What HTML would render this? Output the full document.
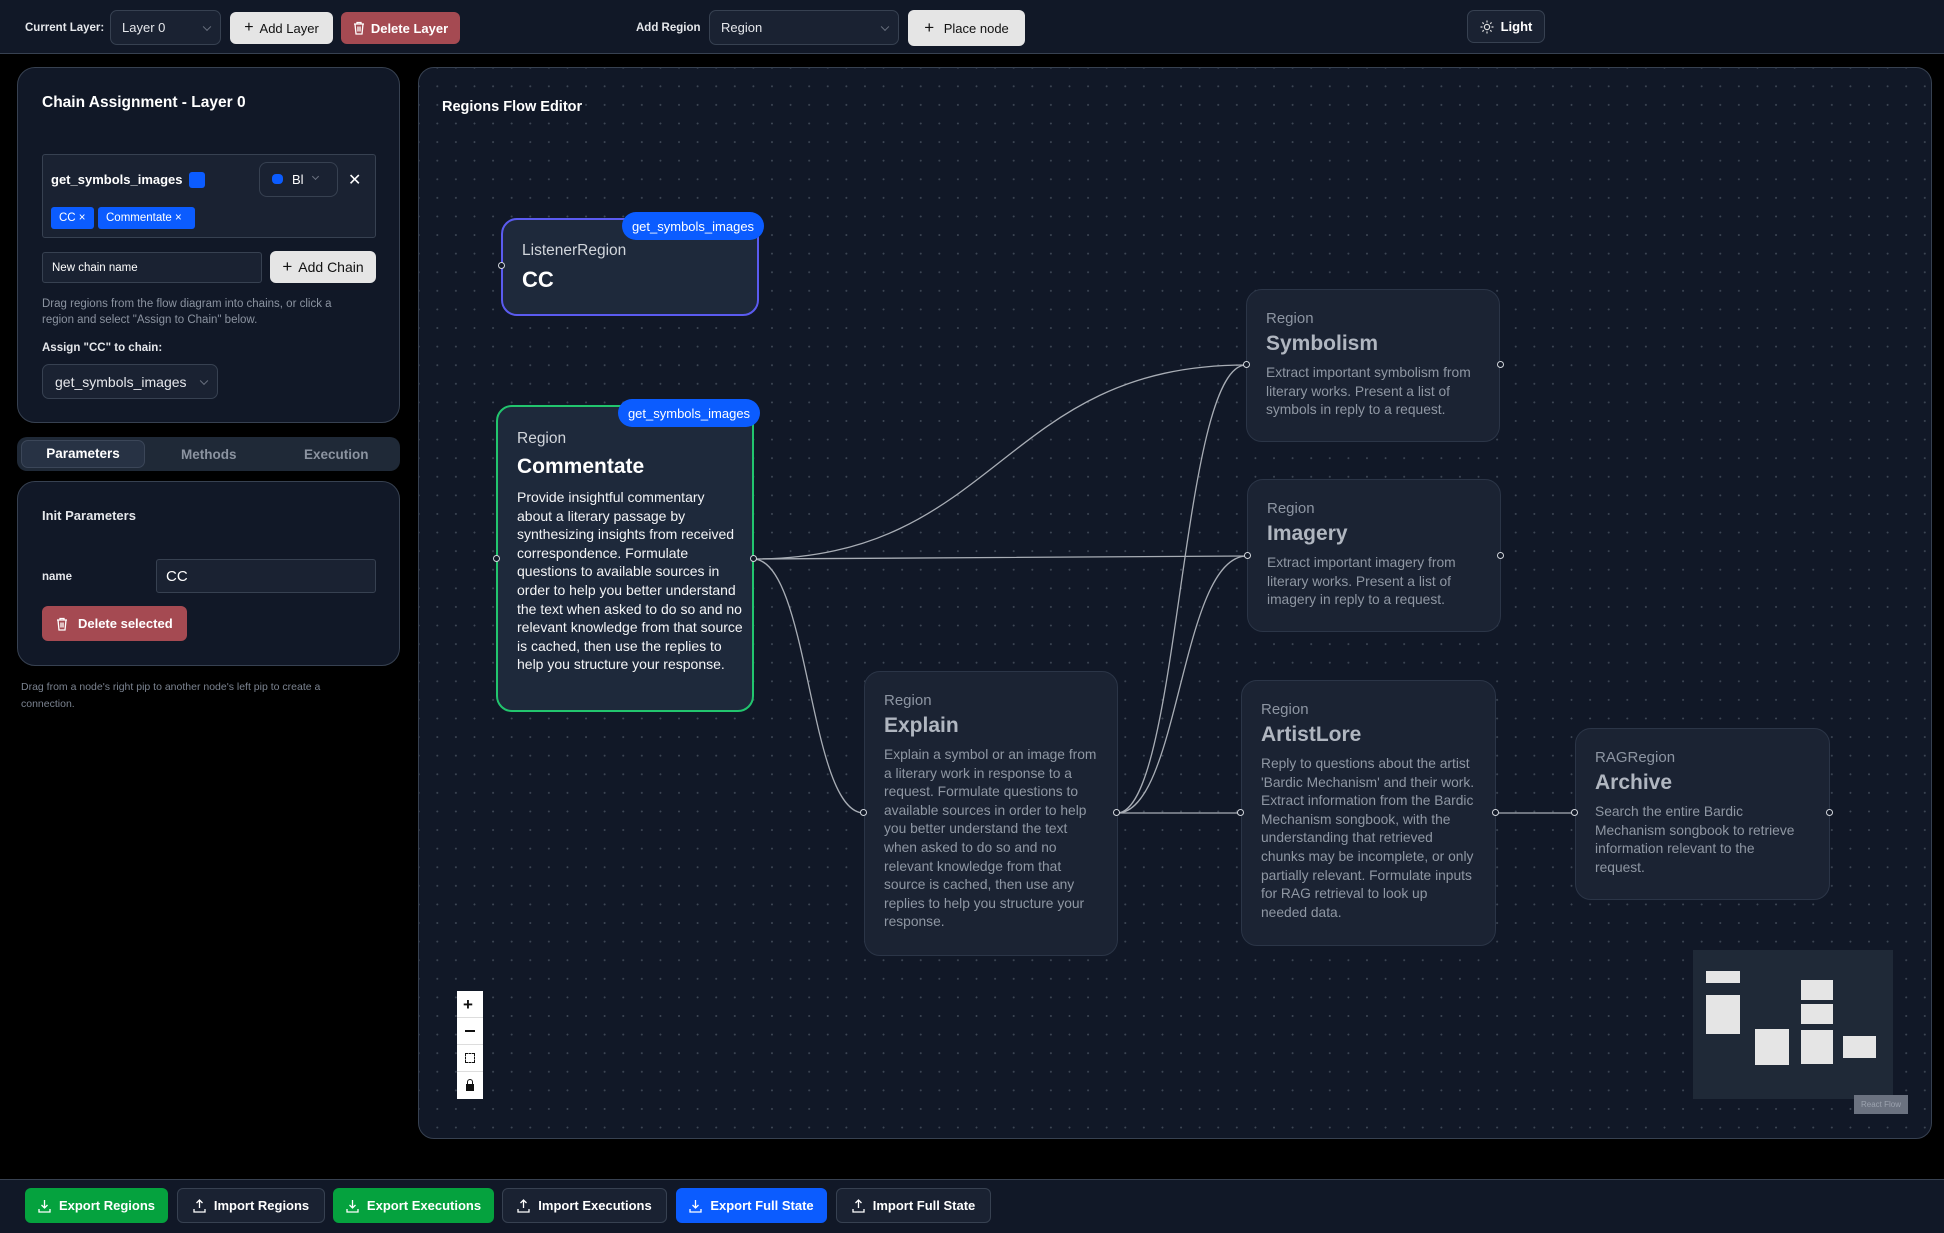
<!DOCTYPE html>
<html><head><meta charset="utf-8">
<style>
*{box-sizing:border-box;margin:0;padding:0}
body{width:1944px;height:1233px;background:#000;font-family:"Liberation Sans",sans-serif;color:#e5e7eb;position:relative;overflow:hidden}
.a{position:absolute}
.top{left:0;top:0;width:1944px;height:54px;background:#111827;border-bottom:1px solid #374151}
.sel{background:#1a2232;border:1px solid #374151;border-radius:7px;color:#e5e7eb;font-size:13px;display:flex;align-items:center;padding-left:11px}
.sel .cv{position:absolute;right:10px;top:50%;width:6px;height:6px;border-right:1px solid #6b7280;border-bottom:1px solid #6b7280;transform:translateY(-70%) rotate(45deg)}
.btnw{background:#e5e5e5;color:#111;border-radius:6px;font-size:13px;display:flex;align-items:center;justify-content:center;gap:6px}
.btnr{background:#a54a52;color:#fff;border-radius:6px;font-size:13px;font-weight:bold;display:flex;align-items:center;justify-content:center;gap:6px}
.panel{background:#111827;border:1px solid #374151;border-radius:18px}
.lbl{font-size:12px;font-weight:bold;color:#e5e7eb}
.help{font-size:11.5px;color:#8b93a0;line-height:16px}
.bb{border-radius:6px;font-size:13px;font-weight:bold;color:#fff;display:flex;align-items:center;justify-content:center;gap:8px;height:35px;top:1188px}
.g{background:#05a23e}.dk{background:#1a2232;border:1px solid #374151}.bl{background:#0b5cff}
.node{border-radius:16px;position:absolute}
.dim{background:#1b2333;border:1px solid #2b3547}
.dim .k{color:#8d95a2;font-size:15px}
.dim .t{color:#b0b6c0;font-size:21px;font-weight:bold;margin-top:5px}
.dim .d{color:#8f97a3;font-size:13.8px;line-height:18.6px;margin-top:8px}
.badge{background:#0b5cff;color:#fff;font-size:13px;border-radius:14px;display:flex;align-items:center;justify-content:center;height:28px}
.pip{position:absolute;width:7px;height:7px;border:1.5px solid #d1d5db;background:#111827;border-radius:50%}
</style></head><body>
<div class="a top"></div>
<div class="a lbl" style="left:25px;top:22px;font-size:11.5px">Current Layer:</div>
<div class="a sel" style="left:110px;top:10px;width:111px;height:35px">Layer 0<span class="cv"></span></div>
<div class="a btnw" style="left:230px;top:12px;width:103px;height:32px"><span style="font-size:16px">+</span>Add Layer</div>
<div class="a btnr" style="left:341px;top:12px;width:119px;height:32px"><svg width="12" height="14" viewBox="0 0 12 14"><path d="M1 3h10M4 3V1.5h4V3M2 3l1 10h6l1-10M5 5.5v5M7 5.5v5" stroke="#fff" stroke-width="1.3" fill="none"/></svg>Delete Layer</div>
<div class="a lbl" style="left:636px;top:22px;font-size:11.5px">Add Region</div>
<div class="a sel" style="left:709px;top:10px;width:190px;height:35px">Region<span class="cv"></span></div>
<div class="a btnw" style="left:908px;top:10px;width:117px;height:36px"><span style="font-size:17px">+</span>&nbsp;Place node</div>
<div class="a" style="left:1467px;top:10px;width:78px;height:33px;border:1px solid #374151;border-radius:7px;background:#1a2232;display:flex;align-items:center;justify-content:center;gap:7px;font-size:13px;font-weight:bold;color:#fff"><svg width="14" height="14" viewBox="0 0 14 14"><circle cx="7" cy="7" r="2.6" stroke="#ddd" fill="none" stroke-width="1.2"/><path d="M7 0.5v2M7 11.5v2M0.5 7h2M11.5 7h2M2.4 2.4l1.4 1.4M10.2 10.2l1.4 1.4M2.4 11.6l1.4-1.4M10.2 3.8l1.4-1.4" stroke="#ddd" stroke-width="1.2"/></svg>Light</div>

<!-- left panel -->
<div class="a panel" style="left:17px;top:67px;width:383px;height:356px"></div>
<div class="a" style="left:42px;top:94px;font-size:15.5px;font-weight:bold;color:#fff">Chain Assignment - Layer 0</div>
<div class="a" style="left:42px;top:154px;width:334px;height:84px;background:#1a2232;border:1px solid #374151;border-radius:3px"></div>
<div class="a" style="left:51px;top:172px;font-size:13px;font-weight:bold;color:#fff">get_symbols_images</div>
<div class="a" style="left:189px;top:172px;width:16px;height:16px;background:#0b5cff;border-radius:3px"></div>
<div class="a" style="left:259px;top:162px;width:79px;height:35px;border:1px solid #374151;border-radius:8px;background:#1a2232"></div>
<div class="a" style="left:272px;top:174px;width:11px;height:10px;background:#0b5cff;border-radius:4px"></div>
<div class="a" style="left:292px;top:172px;font-size:13px;color:#fff">Bl</div>
<div class="a" style="left:313px;top:174px;width:5px;height:5px;border-right:1px solid #6b7280;border-bottom:1px solid #6b7280;transform:rotate(45deg)"></div>
<div class="a" style="left:348px;top:170px;font-size:16px;color:#fff">✕</div>
<div class="a" style="left:51px;top:207px;width:43px;height:22px;background:#0b5cff;border-radius:3px;font-size:11.5px;color:#fff;padding:5px 0 0 8px">CC ×</div>
<div class="a" style="left:98px;top:207px;width:97px;height:22px;background:#0b5cff;border-radius:3px;font-size:11.5px;color:#fff;padding:5px 0 0 8px">Commentate ×</div>
<div class="a" style="left:42px;top:252px;width:220px;height:31px;border:1px solid #374151;background:#1a2232;border-radius:3px;font-size:11.5px;color:#fff;padding:9px 0 0 9px">New chain name</div>
<div class="a btnw" style="left:270px;top:251px;width:106px;height:32px;font-size:14px"><span style="font-size:17px">+</span>Add Chain</div>
<div class="a help" style="left:42px;top:296px;width:320px">Drag regions from the flow diagram into chains, or click a region and select "Assign to Chain" below.</div>
<div class="a lbl" style="left:42px;top:342px;font-size:11.5px">Assign "CC" to chain:</div>
<div class="a sel" style="left:42px;top:364px;width:176px;height:35px;padding-left:12px;font-size:14px">get_symbols_images<span class="cv"></span></div>
<div class="a" style="left:17px;top:437px;width:383px;height:34px;background:#1f2937;border-radius:10px"></div>
<div class="a" style="left:21px;top:440px;width:124px;height:28px;background:#273244;border:1px solid #3b4658;border-radius:7px;font-size:13.5px;font-weight:bold;color:#fff;text-align:center;line-height:26px">Parameters</div>
<div class="a" style="left:181px;top:447px;font-size:13.5px;font-weight:bold;color:#8b93a0">Methods</div>
<div class="a" style="left:304px;top:447px;font-size:13.5px;font-weight:bold;color:#8b93a0">Execution</div>
<div class="a panel" style="left:17px;top:481px;width:383px;height:185px"></div>
<div class="a lbl" style="left:42px;top:508px;font-size:13px">Init Parameters</div>
<div class="a lbl" style="left:42px;top:571px;font-size:11.5px">name</div>
<div class="a" style="left:156px;top:559px;width:220px;height:34px;background:#1a2232;border:1px solid #374151;border-radius:3px;font-size:15px;color:#fff;padding:8px 0 0 9px">CC</div>
<div class="a btnr" style="left:42px;top:606px;width:145px;height:35px;font-size:13px"><svg width="12" height="14" viewBox="0 0 12 14"><path d="M1 3h10M4 3V1.5h4V3M2 3l1 10h6l1-10M5 5.5v5M7 5.5v5" stroke="#fff" stroke-width="1.3" fill="none"/></svg>&nbsp;Delete selected</div>
<div class="a help" style="left:21px;top:679px;width:330px;font-size:10.5px;line-height:17px;color:#7b8390">Drag from a node's right pip to another node's left pip to create a connection.</div>

<!-- canvas -->
<div class="a" style="left:418px;top:67px;width:1514px;height:1072px;background-color:#111827;border:1px solid #374151;border-radius:16px;background-image:radial-gradient(circle,#3d4654 0.8px,transparent 1.1px);background-size:18.6px 18.6px;background-position:9px 9px"></div>
<div class="a" style="left:442px;top:99px;font-size:14.5px;font-weight:bold;color:#fff">Regions Flow Editor</div>

<svg class="a" style="left:0;top:0" width="1944" height="1233">
<g stroke="#a8adb5" stroke-width="1.3" fill="none">
<path d="M753 559 C1000 559 1000 365 1246 365"/>
<path d="M753 559 C1000 559 1000 556 1247 556"/>
<path d="M753 559 C810 559 808 813 864 813"/>
<path d="M1117 813 C1180 813 1180 365 1246 365"/>
<path d="M1117 813 C1180 813 1180 556 1247 556"/>
<path d="M1117 813 L1241 813"/>
<path d="M1495 813 L1575 813"/>
</g></svg>

<!-- CC node -->
<div class="node" style="left:501px;top:218px;width:258px;height:98px;background:#1e293b;border:2.5px solid #5b5bf0"></div>
<div class="a" style="left:522px;top:242px;font-size:15.5px;color:#d1d5db">ListenerRegion</div>
<div class="a" style="left:522px;top:267px;font-size:22px;font-weight:bold;color:#fff">CC</div>
<div class="a badge" style="left:622px;top:212px;width:142px">get_symbols_images</div>
<div class="pip" style="left:498px;top:262px"></div>

<!-- Commentate -->
<div class="node" style="left:496px;top:405px;width:258px;height:307px;background:#1e293b;border:2.5px solid #22c56e"></div>
<div class="a" style="left:517px;top:430px;font-size:15.5px;color:#d1d5db">Region</div>
<div class="a" style="left:517px;top:455px;font-size:21px;font-weight:bold;color:#fff">Commentate</div>
<div class="a" style="left:517px;top:488px;width:226px;font-size:14px;line-height:18.6px;color:#f3f4f6">Provide insightful commentary about a literary passage by synthesizing insights from received correspondence. Formulate questions to available sources in order to help you better understand the text when asked to do so and no relevant knowledge from that source is cached, then use the replies to help you structure your response.</div>
<div class="a badge" style="left:618px;top:399px;width:142px">get_symbols_images</div>
<div class="pip" style="left:493px;top:555px"></div><div class="pip" style="left:750px;top:555px"></div>

<!-- dim nodes -->
<div class="node dim" style="left:1246px;top:289px;width:254px;height:153px;padding:20px 19px"><div class="k">Region</div><div class="t">Symbolism</div><div class="d">Extract important symbolism from literary works. Present a list of symbols in reply to a request.</div></div>
<div class="pip" style="left:1243px;top:361px"></div><div class="pip" style="left:1497px;top:361px"></div>
<div class="node dim" style="left:1247px;top:479px;width:254px;height:153px;padding:20px 19px"><div class="k">Region</div><div class="t">Imagery</div><div class="d">Extract important imagery from literary works. Present a list of imagery in reply to a request.</div></div>
<div class="pip" style="left:1244px;top:552px"></div><div class="pip" style="left:1497px;top:552px"></div>
<div class="node dim" style="left:864px;top:671px;width:254px;height:285px;padding:20px 19px"><div class="k">Region</div><div class="t">Explain</div><div class="d">Explain a symbol or an image from a literary work in response to a request. Formulate questions to available sources in order to help you better understand the text when asked to do so and no relevant knowledge from that source is cached, then use any replies to help you structure your response.</div></div>
<div class="pip" style="left:860px;top:809px"></div><div class="pip" style="left:1113px;top:809px"></div>
<div class="node dim" style="left:1241px;top:680px;width:255px;height:266px;padding:20px 19px"><div class="k">Region</div><div class="t">ArtistLore</div><div class="d">Reply to questions about the artist 'Bardic Mechanism' and their work. Extract information from the Bardic Mechanism songbook, with the understanding that retrieved chunks may be incomplete, or only partially relevant. Formulate inputs for RAG retrieval to look up needed data.</div></div>
<div class="pip" style="left:1237px;top:809px"></div><div class="pip" style="left:1492px;top:809px"></div>
<div class="node dim" style="left:1575px;top:728px;width:255px;height:172px;padding:20px 26px 20px 19px"><div class="k">RAGRegion</div><div class="t">Archive</div><div class="d">Search the entire Bardic Mechanism songbook to retrieve information relevant to the request.</div></div>
<div class="pip" style="left:1571px;top:809px"></div><div class="pip" style="left:1826px;top:809px"></div>

<!-- controls -->
<div class="a" style="left:457px;top:991px;width:26px;height:108px;background:#fff"></div>
<div class="a" style="left:457px;top:1017px;width:26px;height:1px;background:#ddd"></div>
<div class="a" style="left:457px;top:1044px;width:26px;height:1px;background:#ddd"></div>
<div class="a" style="left:457px;top:1071px;width:26px;height:1px;background:#ddd"></div>
<div class="a" style="left:463px;top:995px;font-size:17px;color:#111;font-weight:bold">+</div>
<div class="a" style="left:465px;top:1030px;width:10px;height:2px;background:#111"></div>
<div class="a" style="left:465px;top:1053px;width:10px;height:10px;border:1.5px dashed #111"></div>
<div class="a" style="left:466px;top:1084px;width:8px;height:7px;background:#111"></div>
<div class="a" style="left:467px;top:1079px;width:6px;height:6px;border:1.3px solid #111;border-bottom:none;border-radius:3px 3px 0 0"></div>

<!-- minimap -->
<div class="a" style="left:1693px;top:950px;width:200px;height:149px;background:#1f2937"></div>
<div class="a" style="left:1706px;top:971px;width:34px;height:12px;background:#e5e5e5"></div>
<div class="a" style="left:1706px;top:995px;width:34px;height:39px;background:#e5e5e5"></div>
<div class="a" style="left:1755px;top:1029px;width:34px;height:36px;background:#e5e5e5"></div>
<div class="a" style="left:1801px;top:980px;width:32px;height:20px;background:#e5e5e5"></div>
<div class="a" style="left:1801px;top:1004px;width:32px;height:20px;background:#e5e5e5"></div>
<div class="a" style="left:1801px;top:1030px;width:32px;height:34px;background:#e5e5e5"></div>
<div class="a" style="left:1843px;top:1036px;width:33px;height:22px;background:#e5e5e5"></div>
<div class="a" style="left:1854px;top:1095px;width:54px;height:19px;background:#6b7280;font-size:8px;color:#9ca3af;text-align:center;line-height:19px">React Flow</div>

<!-- bottom bar -->
<div class="a" style="left:0;top:1179px;width:1944px;height:54px;background:#111827;border-top:1px solid #374151"></div>
<div class="a bb g" style="left:25px;width:143px"><svg width="13" height="14" viewBox="0 0 13 14"><path d="M6.5 1v8M3.5 6l3 3 3-3M1 10v3h11v-3" stroke="#fff" stroke-width="1.3" fill="none"/></svg>Export Regions</div>
<div class="a bb dk" style="left:177px;width:148px"><svg width="13" height="14" viewBox="0 0 13 14"><path d="M6.5 9V1M3.5 4l3-3 3 3M1 10v3h11v-3" stroke="#fff" stroke-width="1.3" fill="none"/></svg>Import Regions</div>
<div class="a bb g" style="left:333px;width:161px"><svg width="13" height="14" viewBox="0 0 13 14"><path d="M6.5 1v8M3.5 6l3 3 3-3M1 10v3h11v-3" stroke="#fff" stroke-width="1.3" fill="none"/></svg>Export Executions</div>
<div class="a bb dk" style="left:502px;width:165px"><svg width="13" height="14" viewBox="0 0 13 14"><path d="M6.5 9V1M3.5 4l3-3 3 3M1 10v3h11v-3" stroke="#fff" stroke-width="1.3" fill="none"/></svg>Import Executions</div>
<div class="a bb bl" style="left:676px;width:151px"><svg width="13" height="14" viewBox="0 0 13 14"><path d="M6.5 1v8M3.5 6l3 3 3-3M1 10v3h11v-3" stroke="#fff" stroke-width="1.3" fill="none"/></svg>Export Full State</div>
<div class="a bb dk" style="left:836px;width:155px"><svg width="13" height="14" viewBox="0 0 13 14"><path d="M6.5 9V1M3.5 4l3-3 3 3M1 10v3h11v-3" stroke="#fff" stroke-width="1.3" fill="none"/></svg>Import Full State</div>
</body></html>
